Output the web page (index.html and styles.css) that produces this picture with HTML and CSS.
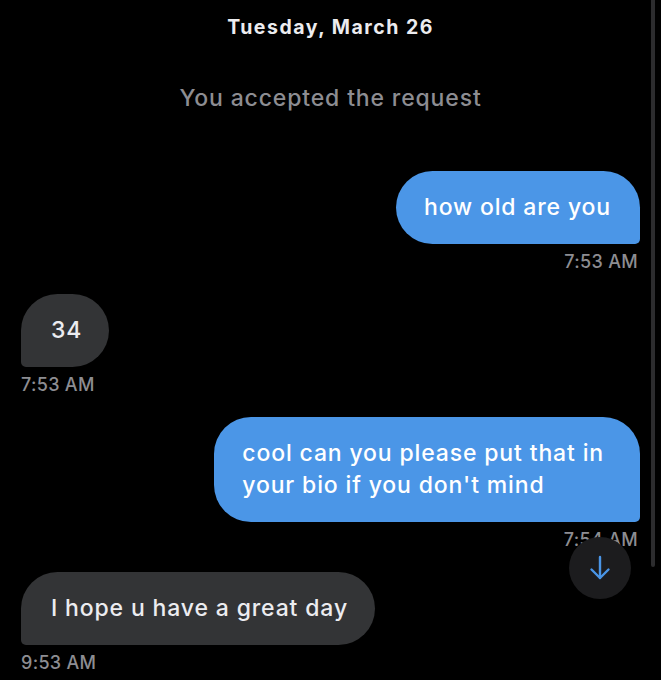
FILE: index.html
```html
<!DOCTYPE html>
<html lang="en">
<head>
<meta charset="utf-8">
<title>Chat</title>
<link rel="stylesheet" href="styles.css">
</head>
<body>
<div class="screen">
  <div class="chat">
    <div class="date">Tuesday, March 26</div>
    <div class="system">You accepted the request</div>

    <div class="msg out">
      <div class="bubble">how old are you</div>
      <div class="time">7:53 AM</div>
    </div>

    <div class="msg in">
      <div class="bubble">34</div>
      <div class="time">7:53 AM</div>
    </div>

    <div class="msg out">
      <div class="bubble wrapped">cool can you please put that in<br>your bio if you don't mind</div>
      <div class="time">7:54 AM</div>
    </div>

    <div class="msg in">
      <div class="bubble">I hope u have a great day</div>
      <div class="time">9:53 AM</div>
    </div>
  </div>

  <div class="scrollbar"></div>

  <button class="jump" aria-label="Scroll to bottom">
    <svg width="24" height="28" viewBox="0 0 24 28" fill="none" stroke="#4a95e6" stroke-width="2.4" stroke-linecap="round" stroke-linejoin="round">
      <path d="M12 3 V24"/>
      <path d="M3.5 15.5 L12 24 L20.5 15.5"/>
    </svg>
  </button>
</div>
</body>
</html>
```

FILE: styles.css
```css
* { box-sizing: border-box; }

html, body {
  margin: 0;
  padding: 0;
  background: #000;
}

body {
  font-family: Inter, "Noto Sans", "Liberation Sans", sans-serif;
  color: #fff;
}

.screen {
  position: relative;
  width: 661px;
  height: 680px;
  overflow: hidden;
  background: #000;
}

.chat {
  display: flex;
  flex-direction: column;
  padding: 13px 21px 0 21px;
}

.date {
  text-align: center;
  font-size: 19.5px;
  font-weight: 700;
  letter-spacing: 1.5px;
  line-height: 28px;
  color: #ececef;
}

.system {
  margin-top: 42px;
  text-align: center;
  font-size: 23px;
  font-weight: 500;
  letter-spacing: 0.85px;
  line-height: 30px;
  color: #8d8d92;
}

.msg {
  display: flex;
  flex-direction: column;
}

.msg + .msg {
  margin-top: 22px;
}

.system + .msg { margin-top: 58px; }

.msg.out { align-items: flex-end; }
.msg.in { align-items: flex-start; }

.bubble {
  font-size: 23px;
  font-weight: 500;
  letter-spacing: 0.85px;
  line-height: 32px;
  padding: 20px 29px 21px 28px;
}

.bubble.wrapped {
  padding-right: 36px;
}

.out .bubble {
  background: #4b96e7;
  color: #fff;
  border-radius: 37px 37px 5px 37px;
}

.in .bubble {
  background: #333436;
  color: #ececf0;
  border-radius: 37px 37px 37px 5px;
  padding-left: 30px;
  padding-right: 27px;
}

.time {
  margin-top: 8px;
  font-size: 18px;
  font-weight: 500;
  letter-spacing: 0.3px;
  line-height: 20px;
  color: #8d8d92;
}

.out .time { margin-right: 2px; }

.scrollbar {
  position: absolute;
  top: 0;
  left: 651px;
  width: 4px;
  height: 567px;
  border-radius: 0 0 2px 2px;
  background: #2c2c2e;
}

.jump {
  position: absolute;
  left: 569px;
  top: 537px;
  width: 62px;
  height: 62px;
  border: 0;
  padding: 0;
  border-radius: 50%;
  background: #1c1c1e;
  display: flex;
  align-items: center;
  justify-content: center;
}
```
